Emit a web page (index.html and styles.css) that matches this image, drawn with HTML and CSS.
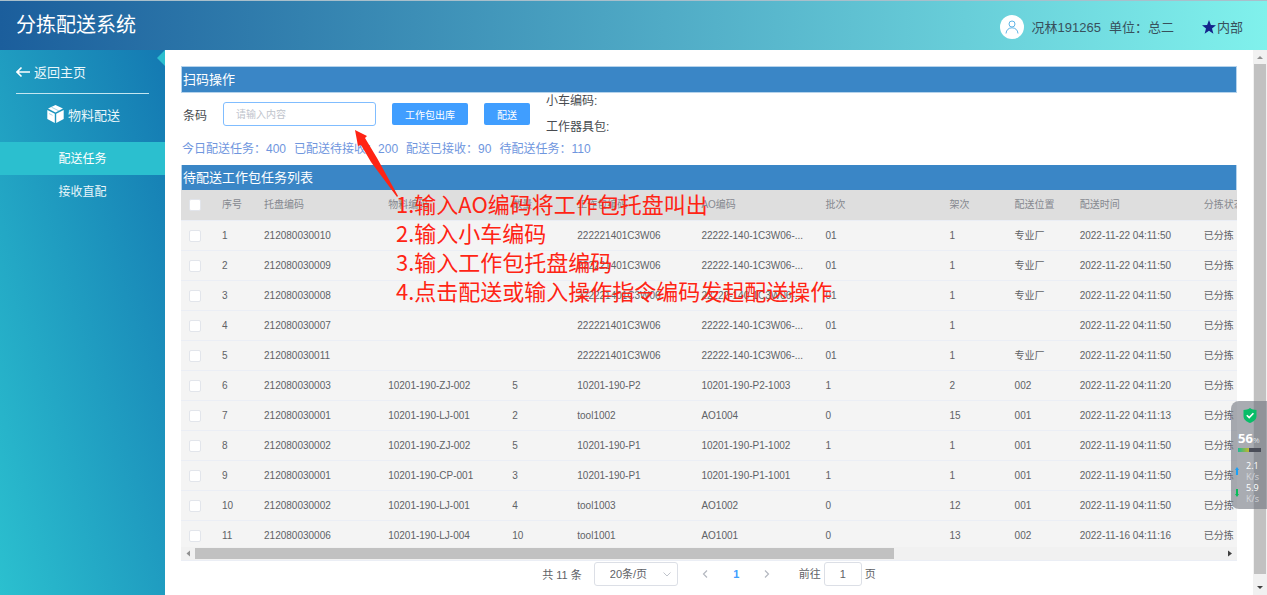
FILE: index.html
```html
<!DOCTYPE html>
<html lang="zh-CN">
<head>
<meta charset="utf-8">
<title>分拣配送系统</title>
<link rel="stylesheet" href="styles.css">
</head>
<body>
<header class="topbar">
  <h1 class="brand">分拣配送系统</h1>
  <div class="user">
    <span class="avatar"><svg width="14" height="14" viewBox="0 0 14 14" fill="none" stroke="#5fb4e6"><circle cx="7" cy="4" r="3"/><path d="M1 13.5c.3-3.600 2.700-5.700 6-5.700s5.700 2.100 6 5.700"/></svg></span>
    <span class="user-name">况林191265</span>
    <span>单位：总二</span>
    <span class="scope"><svg width="14" height="14" viewBox="0 0 14 14"><path fill="#14238c" d="M7 0l1.900 4.900 5.100.3-4 3.300 1.400 5.200L7 10.800l-4.400 2.900L4 8.500 0 5.200l5.100-.3z"/></svg>内部</span>
  </div>
</header>
<div class="body">
  <nav class="sidebar">
    <a class="back" href="#"><svg width="14" height="12" viewBox="0 0 14 12" fill="none" stroke="#fff" stroke-width="1.600"><path d="M14 6H1M5.500 1.500L1 6l4.500 4.500"/></svg>返回主页</a>
    <a class="group" href="#"><svg width="17" height="18" viewBox="0 0 17 18"><path fill="#fff" d="M8.500 0L16 3.600 8.500 7.400 1 3.600zM.3 5l7.500 3.700V18L.3 14zM16.700 5L9.200 8.700V18l7.500-4z"/><path d="M4.500 2.200l7.800 3.900M2 8.500l3.500 1.800" stroke="#7cc4dc" stroke-width=".7"/></svg>物料配送</a>
    <a class="item active" href="#">配送任务</a>
    <a class="item" href="#">接收直配</a>
    <span class="notch"></span>
  </nav>
  <main class="main">
    <h2 class="section">扫码操作</h2>
    <form class="scan">
      <label class="scan-label" for="code">条码</label>
      <input class="scan-input" id="code" type="text" placeholder="请输入内容">
      <button class="btn" type="button">工作包出库</button>
      <button class="btn" type="button">配送</button>
      <div class="codes"><span>小车编码:</span><span>工作器具包:</span></div>
    </form>
    <div class="stats"><span>今日配送任务：400</span><span>已配送待接收：200</span><span>配送已接收：90</span><span>待配送任务：110</span></div>
    <h2 class="section list-title">待配送工作包任务列表</h2>
    <div class="grid">
      <table class="table">
        <colgroup><col class="c-check"><col class="c-index"><col class="c-wide"><col class="c-wide"><col class="c-narrow"><col class="c-wide"><col class="c-wide"><col class="c-wide"><col class="c-narrow"><col class="c-narrow"><col class="c-wide"><col class="c-wide"></colgroup>
        <thead><tr><th><input type="checkbox" aria-label="全选"></th><th>序号</th><th>托盘编码</th><th>物料编码</th><th>数量</th><th>工作包编码</th><th>AO编码</th><th>批次</th><th>架次</th><th>配送位置</th><th>配送时间</th><th>分拣状态</th></tr></thead>
        <tbody>
          <tr><td><input type="checkbox" aria-label="选择 1"></td><td>1</td><td>212080030010</td><td></td><td></td><td>222221401C3W06</td><td>22222-140-1C3W06-...</td><td>01</td><td>1</td><td>专业厂</td><td>2022-11-22 04:11:50</td><td>已分拣</td></tr>
          <tr><td><input type="checkbox" aria-label="选择 2"></td><td>2</td><td>212080030009</td><td></td><td></td><td>222221401C3W06</td><td>22222-140-1C3W06-...</td><td>01</td><td>1</td><td>专业厂</td><td>2022-11-22 04:11:50</td><td>已分拣</td></tr>
          <tr><td><input type="checkbox" aria-label="选择 3"></td><td>3</td><td>212080030008</td><td></td><td></td><td>222221401C3W06</td><td>22222-140-1C3W06-...</td><td>01</td><td>1</td><td>专业厂</td><td>2022-11-22 04:11:50</td><td>已分拣</td></tr>
          <tr><td><input type="checkbox" aria-label="选择 4"></td><td>4</td><td>212080030007</td><td></td><td></td><td>222221401C3W06</td><td>22222-140-1C3W06-...</td><td>01</td><td>1</td><td></td><td>2022-11-22 04:11:50</td><td>已分拣</td></tr>
          <tr><td><input type="checkbox" aria-label="选择 5"></td><td>5</td><td>212080030011</td><td></td><td></td><td>222221401C3W06</td><td>22222-140-1C3W06-...</td><td>01</td><td>1</td><td>专业厂</td><td>2022-11-22 04:11:50</td><td>已分拣</td></tr>
          <tr><td><input type="checkbox" aria-label="选择 6"></td><td>6</td><td>212080030003</td><td>10201-190-ZJ-002</td><td>5</td><td>10201-190-P2</td><td>10201-190-P2-1003</td><td>1</td><td>2</td><td>002</td><td>2022-11-22 04:11:20</td><td>已分拣</td></tr>
          <tr><td><input type="checkbox" aria-label="选择 7"></td><td>7</td><td>212080030001</td><td>10201-190-LJ-001</td><td>2</td><td>tool1002</td><td>AO1004</td><td>0</td><td>15</td><td>001</td><td>2022-11-22 04:11:13</td><td>已分拣</td></tr>
          <tr><td><input type="checkbox" aria-label="选择 8"></td><td>8</td><td>212080030002</td><td>10201-190-ZJ-002</td><td>5</td><td>10201-190-P1</td><td>10201-190-P1-1002</td><td>1</td><td>1</td><td>001</td><td>2022-11-19 04:11:50</td><td>已分拣</td></tr>
          <tr><td><input type="checkbox" aria-label="选择 9"></td><td>9</td><td>212080030001</td><td>10201-190-CP-001</td><td>3</td><td>10201-190-P1</td><td>10201-190-P1-1001</td><td>1</td><td>1</td><td>001</td><td>2022-11-19 04:11:50</td><td>已分拣</td></tr>
          <tr><td><input type="checkbox" aria-label="选择 10"></td><td>10</td><td>212080030002</td><td>10201-190-LJ-001</td><td>4</td><td>tool1003</td><td>AO1002</td><td>0</td><td>12</td><td>001</td><td>2022-11-19 04:11:50</td><td>已分拣</td></tr>
          <tr><td><input type="checkbox" aria-label="选择 11"></td><td>11</td><td>212080030006</td><td>10201-190-LJ-004</td><td>10</td><td>tool1001</td><td>AO1001</td><td>0</td><td>13</td><td>002</td><td>2022-11-16 04:11:16</td><td>已分拣</td></tr>
        </tbody>
      </table>
    </div>
    <div class="hscroll">
      <svg width="14" height="13" viewBox="0 0 14 13"><path fill="#909090" d="M9 3.500v6L5.500 6.500z"/></svg>
      <div class="htrack"><div class="hthumb"></div></div>
      <svg width="14" height="13" viewBox="0 0 14 13"><path fill="#404040" d="M5 3.500v6l4-3z"/></svg>
    </div>
    <div class="pager">
      <span>共 11 条</span>
      <span class="size"><select aria-label="每页条数"><option>20条/页</option></select><svg width="8" height="5" viewBox="0 0 8 5" fill="none" stroke="#c0c4cc"><path d="M.5.500L4 4 7.500.500"/></svg></span>
      <button class="page" type="button" aria-label="上一页"><svg width="6" height="8" viewBox="0 0 6 8" fill="none" stroke="#b4b8c0" stroke-width="1.200"><path d="M5 .5L1.500 4 5 7.500"/></svg></button>
      <button class="page current" type="button">1</button>
      <button class="page" type="button" aria-label="下一页"><svg width="6" height="8" viewBox="0 0 6 8" fill="none" stroke="#b4b8c0" stroke-width="1.200"><path d="M1 .5L4.500 4 1 7.500"/></svg></button>
      <label class="jump">前往<input type="text" value="1">页</label>
    </div>
  </main>
  <div class="vscroll">
    <svg width="14" height="14" viewBox="0 0 14 14"><path fill="#909090" d="M4 9h6L7 6z"/></svg>
    <div class="vthumb"></div>
    <svg width="14" height="21" viewBox="0 0 14 21"><path fill="#404040" d="M4 12h6l-3 3z"/></svg>
  </div>
</div>
<svg class="arrow" width="46" height="70" viewBox="0 0 46 70"><path fill="#ff2414" d="M2 1l12 6-2 2 12 20 21 38-1 1L18 33 8 16l-3 1z"/></svg>
<ol class="notes">
  <li>1.输入AO编码将工作包托盘叫出</li>
  <li>2.输入小车编码</li>
  <li>3.输入工作包托盘编码</li>
  <li>4.点击配送或输入操作指令编码发起配送操作</li>
</ol>
<aside class="monitor">
  <svg class="shield" width="14" height="15" viewBox="0 0 14 15"><path fill="#08bd68" d="M7 0c2 1.400 4 1.900 6.500 2v6c0 3.500-3 5.700-6.500 7C3.500 13.700.5 11.500.5 8V2C3 1.900 5 1.400 7 0z"/><path d="M3.800 7.200l2.400 2.400 4.200-4.300" fill="none" stroke="#fff" stroke-width="1.600"/></svg>
  <div class="load"><b>56</b><small>%</small></div>
  <div class="meter"></div>
  <div class="rate"><svg width="4" height="8" viewBox="0 0 4 8"><path fill="#18a0f8" d="M2 0l2 3H3v5H1V3H0z"/></svg><p>2.1<br><span>K/s</span></p></div>
  <div class="rate"><svg width="4" height="8" viewBox="0 0 4 8"><path fill="#08bd58" d="M2 8L0 5h1V0h2v5h1z"/></svg><p>5.9<br><span>K/s</span></p></div>
</aside>
</body>
</html>
```
FILE: styles.css
```css
* { box-sizing: border-box; }
body {
  margin: 0;
  height: 100vh;
  display: flex;
  flex-direction: column;
  position: relative;
  overflow: hidden;
  font-family: "Liberation Sans", "Noto Sans CJK SC", sans-serif;
  font-size: 12px;
  color: #606266;
  background: #fff;
}
a { color: inherit; text-decoration: none; }
input, select, button { font-family: inherit; margin: 0; }
svg { flex: none; }

.topbar {
  flex: none;
  height: 50px;
  display: flex;
  align-items: center;
  justify-content: space-between;
  padding: 2px 24px 0 16px;
  border-top: 1px solid #a9bfcb;
  background: linear-gradient(90deg, #1b5e9c, #80f1ec);
}
.brand { margin: 0; padding-bottom: 4px; font-size: 20px; line-height: 28px; font-weight: 400; color: #fff; }
.user { display: flex; align-items: center; gap: 8px; font-size: 13px; color: #38505c; }
.avatar {
  width: 24px;
  height: 24px;
  border-radius: 50%;
  background: #fff;
  display: flex;
  align-items: center;
  justify-content: center;
}
.scope { display: flex; align-items: center; gap: 1px; margin-left: 20px; }

.body { flex: 1; min-height: 0; display: flex; }
.sidebar {
  position: relative;
  flex: none;
  width: 165px;
  color: #e8f6fa;
  background: linear-gradient(to top right, #2bc0cf, #1479b2);
}
.back {
  display: flex;
  align-items: center;
  gap: 4px;
  height: 44px;
  margin: 0 16px;
  border-bottom: 1px solid #c4e6f0;
  font-size: 13px;
}
.group { display: flex; align-items: center; justify-content: center; gap: 4px; height: 40px; margin-bottom: 8px; padding-left: 2px; font-size: 13px; }
.item { display: block; height: 33px; line-height: 35px; text-align: center; }
.item.active { background: #2bbfcf; color: #fff; }
.notch {
  position: absolute;
  top: 0;
  right: 0;
  border: solid transparent;
  border-width: 8px 8px 8px 0;
  border-right-color: #2bbfcf;
}

.main { flex: 1; min-width: 0; display: flex; flex-direction: column; padding: 16px 16px 8px; }
.section {
  flex: none;
  margin: 0;
  padding-left: 1px;
  border: 1px solid #b5d3ec;
  background: #3a86c6;
  color: #fff;
  font-size: 13px;
  line-height: 25px;
  font-weight: 400;
}
.list-title { border-width: 0 1px; }
.scan { display: flex; align-items: center; gap: 16px; height: 42px; padding-left: 2px; }
.scan-label { color: #484b50; }
.scan-input {
  width: 153px;
  height: 24px;
  padding: 0 12px;
  border: 1px solid #80bdff;
  border-radius: 3px;
  font-size: 10px;
}
.scan-input::placeholder { color: #c0c4cc; }
.btn {
  height: 22px;
  padding: 0 13px;
  border: 0;
  border-radius: 2px;
  background: #409eff;
  color: #fff;
  font-size: 10px;
}
.codes { display: flex; flex-direction: column; gap: 8px; line-height: 18px; color: #484b50; }
.stats { display: flex; gap: 8px; height: 30px; padding-left: 1px; line-height: 28px; color: #6f96de; }

.grid { flex: 1; min-height: 0; overflow: hidden; background: #f4f4f4; }
.table { width: 1139px; table-layout: fixed; border-collapse: separate; border-spacing: 0; font-size: 10px; }
.c-check { width: 33px; }
.c-index { width: 42px; }
.c-wide { width: 124px; }
.c-narrow { width: 65px; }
.table th, .table td {
  height: 30px;
  padding: 0 0 0 8px;
  border-bottom: 1px solid #ebeef5;
  text-align: left;
  font-weight: 400;
  line-height: 16px;
  white-space: nowrap;
}
.table th { height: 31px; background: #dedede; color: #85888f; }
.table input {
  appearance: none;
  display: block;
  width: 12px;
  height: 12px;
  border: 1px solid #e2e5eb;
  border-radius: 2px;
  background: #fff;
}
.hscroll { flex: none; display: flex; height: 14px; background: #f1f1f1; border-bottom: 1px solid #ebeef5; }
.htrack { flex: 1; padding: 1px 0; }
.hthumb { width: 68%; height: 11px; background: #c1c1c1; }

.pager { flex: none; display: flex; align-items: center; justify-content: center; height: 26px; font-size: 11px; }
.size { position: relative; margin: 0 12px; }
.size select {
  appearance: none;
  display: block;
  width: 84px;
  height: 24px;
  padding: 0 15px;
  border: 1px solid #dcdfe6;
  border-radius: 3px;
  background: #fff;
  color: #606266;
  font-size: 11px;
}
.size svg { position: absolute; right: 7px; top: 10px; }
.page { width: 31px; height: 24px; padding: 0; border: 0; background: none; font-size: 11px; color: #606266; }
.current { color: #409eff; font-weight: 700; }
.jump { margin-left: 16px; }
.jump input {
  width: 38px;
  height: 24px;
  margin: 0 3px;
  border: 1px solid #dcdfe6;
  border-radius: 3px;
  color: #606266;
  font-size: 11px;
  text-align: center;
}

.vscroll { flex: none; width: 14px; display: flex; flex-direction: column; background: #f1f1f1; }
.vthumb { flex: 1; margin: 0 1px; background: #c1c1c1; }

.arrow { position: absolute; left: 353px; top: 129px; }
.notes {
  position: absolute;
  left: 396px;
  top: 189px;
  margin: 0;
  padding: 0;
  list-style: none;
  font-family: "Noto Sans CJK SC", sans-serif;
  font-size: 22px;
  line-height: 29px;
  color: #ff2414;
  white-space: nowrap;
}

.monitor {
  position: absolute;
  right: 0;
  top: 401px;
  width: 36px;
  padding: 7px 0 5px;
  border-radius: 8px 0 0 8px;
  background: rgba(112, 116, 126, 0.6);
  color: #fff;
  font-family: "Open Sans", sans-serif;
}
.shield { display: block; margin: 0 auto 7px 12px; }
.load { padding-left: 7px; line-height: 16px; font-size: 13px; white-space: nowrap; }
.load small { font-size: 8px; color: #dfe1e5; }
.meter { width: 23px; height: 4px; margin: 0 0 8px 7px; background: linear-gradient(90deg, #20b894, #c8b828 50%, #4a4d58 50%); }
.load, .meter { position: static; }
.rate { display: flex; align-items: center; gap: 7px; padding-left: 4px; font-size: 9px; line-height: 11px; }
.rate p { margin: 0; }
.rate span { color: #d4d6da; }
```
